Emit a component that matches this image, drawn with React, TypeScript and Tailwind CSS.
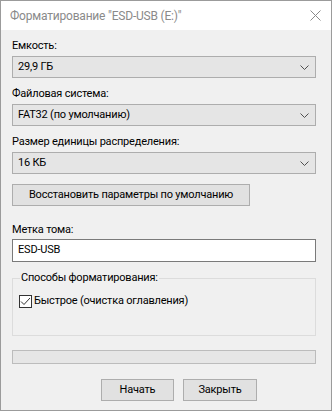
import React from 'react';

const font = { fontFamily: 'Roboto, "Noto Sans", sans-serif' };

function Chevron() {
  return (
    <svg width="9" height="5" viewBox="0 0 9 5" className="shrink-0">
      <path d="M0.5 0.5 L4.5 4.5 L8.5 0.5" fill="none" stroke="#505050" strokeWidth="1" />
    </svg>
  );
}

function Field({ label, value }: { label: string; value: string }) {
  return (
    <div className="mt-[8px]">
      <div className="h-[16px] leading-[16px]">{label}</div>
      <div className="mt-[2px] flex h-[22px] items-center justify-between border border-[#adadad] bg-[#e5e5e5] pl-[5px] pr-[6px]">
        <span className="leading-[16px]">{value}</span>
        <Chevron />
      </div>
    </div>
  );
}

function WinButton({ children, className }: { children: React.ReactNode; className?: string }) {
  return (
    <div
      className={
        'flex h-[22px] items-center justify-center whitespace-nowrap border border-[#adadad] bg-[#e1e1e1] leading-[16px] ' +
        (className ?? '')
      }
    >
      {children}
    </div>
  );
}

export default function App() {
  return (
    <div
      className="flex h-[411px] w-[332px] flex-col border border-[#9b9b9b] bg-[#f0f0f0] text-[11px] tracking-[-0.2px] text-black"
      style={font}
    >
      {/* title bar */}
      <div className="flex h-[29px] shrink-0 items-center justify-between bg-white pl-[9px] pr-[10px]">
        <span className="text-[12px] text-[#8a8a8a]">Форматирование "ESD-USB (E:)"</span>
        <svg width="11" height="11" viewBox="0 0 11 11">
          <path d="M0.5 0.5 L10.5 10.5 M10.5 0.5 L0.5 10.5" stroke="#8a8a8a" strokeWidth="1" />
        </svg>
      </div>

      <div className="flex flex-1 flex-col pl-[11px] pr-[15px]">
        <Field label="Емкость:" value="29,9 ГБ" />
        <Field label="Файловая система:" value="FAT32 (по умолчанию)" />
        <Field label="Размер единицы распределения:" value="16 КБ" />

        <WinButton className="mt-[10px] w-[238px]">Восстановить параметры по умолчанию</WinButton>

        <div className="mt-[16px] h-[16px] leading-[16px]">Метка тома:</div>
        <div className="mt-[1px] flex h-[23px] items-center border border-[#7a7a7a] bg-white pl-[5px]">
          ESD-USB
        </div>

        {/* group box */}
        <div className="relative mt-[16px] h-[58px] border border-[#dcdcdc]">
          <span className="absolute left-[7px] top-[-9px] bg-[#f0f0f0] px-[1px] leading-[16px]">
            Способы форматирования:
          </span>
          <div className="mt-[14px] flex items-center pl-[6px]">
            <div className="flex h-[13px] w-[13px] items-center justify-center border border-[#333333] bg-white">
              <svg width="11" height="9" viewBox="0 0 11 9">
                <path d="M1 4.5 L4 7.5 L10 1" fill="none" stroke="#333333" strokeWidth="1" />
              </svg>
            </div>
            <span className="ml-[2px] leading-[16px]">Быстрое (очистка оглавления)</span>
          </div>
        </div>

        {/* progress */}
        <div className="mt-[14px] h-[14px] border border-[#bcbcbc] bg-[#e6e6e6]" />

        <div className="mt-[15px] flex gap-[9px] pl-[89px]">
          <WinButton className="w-[73px]">Начать</WinButton>
          <WinButton className="w-[74px]">Закрыть</WinButton>
        </div>
      </div>
    </div>
  );
}
